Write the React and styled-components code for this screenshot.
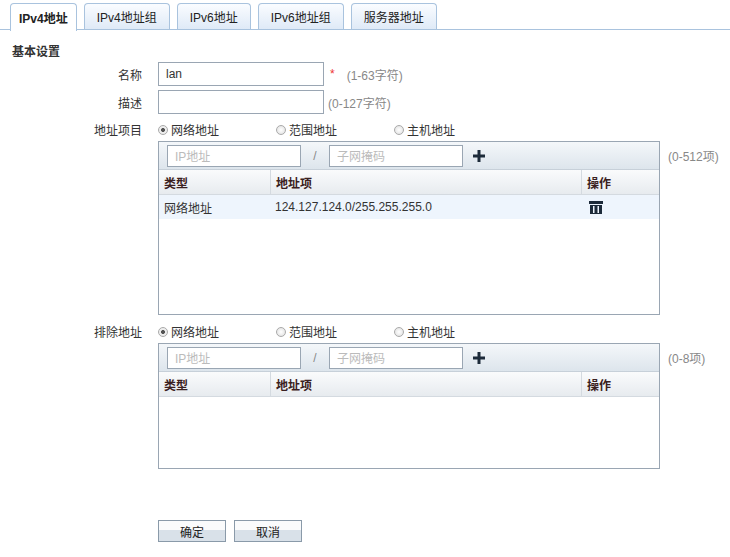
import React from 'react'
import styled, { createGlobalStyle } from 'styled-components'

const Global = createGlobalStyle`
  body {
    margin: 0;
    background: #fff;
    font-family: 'Liberation Sans', 'Noto Sans CJK SC', sans-serif;
    font-size: 12px;
    color: #333;
  }
`

const Page = styled.div`
  width: 730px;
  height: 557px;
  overflow: hidden;
`

const TabBar = styled.div`
  display: flex;
  gap: 7px;
  padding: 3px 0 0 10px;
  height: 26px;
  border-bottom: 1px solid #a9c3de;
  background: #fff;
`

const Tab = styled.div`
  height: ${p => (p.$active ? '27px' : '25px')};
  padding: 0 ${p => p.$pad}px;
  display: flex;
  align-items: center;
  border: 1px solid #a9c3de;
  border-bottom: none;
  border-radius: 4px 4px 0 0;
  background: ${p => (p.$active ? '#fff' : 'linear-gradient(#fafcff, #dfeaf7)')};
  font-weight: ${p => (p.$active ? 'bold' : 'normal')};
  color: #222;
  font-size: 12px;
  margin-bottom: -1px;
`

const Section = styled.div`
  padding: 12px 0 0 12px;
  font-weight: bold;
  color: #333;
`

const Row = styled.div`
  display: flex;
  align-items: ${p => (p.$top ? 'flex-start' : 'center')};
  margin-top: ${p => p.$mt || 0}px;
`

const Label = styled.div`
  width: 158px;
  text-align: right;
  padding-right: 16px;
  box-sizing: border-box;
  color: #333;
`

const TextInput = styled.div`
  width: 166px;
  height: 24px;
  box-sizing: border-box;
  border: 1px solid #9aa6b3;
  padding-left: 7px;
  display: flex;
  align-items: center;
  color: ${p => (p.$ph ? '#bbb' : '#333')};
  background: #fff;
  font-size: 12px;
`

const Hint = styled.span`
  color: #888;
  margin-left: ${p => p.$ml || 4}px;
`

const Star = styled.span`
  color: #e33;
  margin-left: 6px;
`

const Radios = styled.div`
  display: flex;
`

const Radio = styled.label`
  display: flex;
  align-items: center;
  width: ${p => p.$w}px;
  gap: 3px;
  color: #333;
`

const Dot = styled.span`
  width: 10px;
  height: 10px;
  border-radius: 50%;
  border: 1px solid #aaa;
  background: radial-gradient(${p => (p.$on ? '#555 30%, #eee 40%' : '#fff, #ddd')});
  box-sizing: border-box;
`

const Box = styled.div`
  width: 502px;
  height: ${p => p.$h}px;
  box-sizing: border-box;
  border: 1px solid #9aa6b3;
`

const Toolbar = styled.div`
  height: 27px;
  display: flex;
  align-items: center;
  padding-left: 8px;
  background: linear-gradient(#f4f7fa, #dde5ec);
  border-bottom: 1px solid #c7d0d9;
`

const Slash = styled.span`
  width: 28px;
  text-align: center;
  color: #888;
`

const Grid = styled.div`
  display: grid;
  grid-template-columns: 111px 311px 1fr;
`

const Head = styled.div`
  height: 24px;
  display: flex;
  align-items: center;
  padding-left: 5px;
  font-weight: bold;
  color: #3a2020;
  background: linear-gradient(#fafbfc, #e7ebef);
  border-bottom: 1px solid #d4dae0;
  border-left: ${p => (p.$first ? 'none' : '1px solid #d4dae0')};
`

const Cell = styled.div`
  height: 24px;
  display: flex;
  align-items: center;
  padding-left: ${p => p.$pl || 5}px;
  background: #eef5fd;
  color: #333;
`

const Buttons = styled.div`
  display: flex;
  gap: 8px;
  padding: 51px 0 0 158px;
`

const Button = styled.div`
  width: 68px;
  height: 22px;
  box-sizing: border-box;
  border: 1px solid #8a9aa9;
  display: flex;
  align-items: center;
  justify-content: center;
  background: linear-gradient(#fafbfc 0 45%, #d9e1e9 45%);
  color: #222;
`

const Plus = () => (
  <svg width="12" height="12" viewBox="0 0 12 12" style={{ marginLeft: 10 }}>
    <path d="M4.5 0h3v4.5H12v3H7.5V12h-3V7.5H0v-3h4.5z" fill="#1d2b3a" />
  </svg>
)

const Trash = () => (
  <svg width="14" height="13" viewBox="0 0 14 13">
    <rect x="0" y="0" width="14" height="3" fill="#1d2b3a" />
    <rect x="1" y="4" width="12" height="9" fill="#1d2b3a" />
    <rect x="4" y="5" width="1.5" height="7" fill="#eef5fd" />
    <rect x="8.5" y="5" width="1.5" height="7" fill="#eef5fd" />
  </svg>
)

const AddrBox = ({ h, rows }) => (
  <Box $h={h}>
    <Toolbar>
      <TextInput $ph style={{ width: 134, height: 22 }}>IP地址</TextInput>
      <Slash>/</Slash>
      <TextInput $ph style={{ width: 134, height: 22 }}>子网掩码</TextInput>
      <Plus />
    </Toolbar>
    <Grid>
      <Head $first>类型</Head>
      <Head>地址项</Head>
      <Head>操作</Head>
      {rows.map(r => (
        <React.Fragment key={r[1]}>
          <Cell>{r[0]}</Cell>
          <Cell>{r[1]}</Cell>
          <Cell $pl={8}><Trash /></Cell>
        </React.Fragment>
      ))}
    </Grid>
  </Box>
)

const RadioRow = ({ label, mt }) => (
  <Row $mt={mt}>
    <Label>{label}</Label>
    <Radios>
      <Radio $w={118}><Dot $on />网络地址</Radio>
      <Radio $w={118}><Dot />范围地址</Radio>
      <Radio $w={100}><Dot />主机地址</Radio>
    </Radios>
  </Row>
)

export default function App() {
  const tabs = [['IPv4地址', 8, true], ['IPv4地址组', 12], ['IPv6地址', 12], ['IPv6地址组', 12], ['服务器地址', 12]]
  return (
    <Page>
      <Global />
      <TabBar>
        {tabs.map(([t, p, a]) => <Tab key={t} $pad={p} $active={a}>{t}</Tab>)}
      </TabBar>
      <Section>基本设置</Section>
      <Row $mt={3}>
        <Label>名称</Label>
        <TextInput>lan</TextInput>
        <Star>*</Star>
        <Hint $ml={12}>(1-63字符)</Hint>
      </Row>
      <Row $mt={4}>
        <Label>描述</Label>
        <TextInput $ph />
        <Hint>(0-127字符)</Hint>
      </Row>
      <RadioRow label="地址项目" mt={7} />
      <Row $top $mt={3}>
        <Label />
        <AddrBox h={174} rows={[['网络地址', '124.127.124.0/255.255.255.0']]} />
        <Hint $ml={8} style={{ marginTop: 6 }}>(0-512项)</Hint>
      </Row>
      <RadioRow label="排除地址" mt={8} />
      <Row $top $mt={3}>
        <Label />
        <AddrBox h={126} rows={[]} />
        <Hint $ml={8} style={{ marginTop: 6 }}>(0-8项)</Hint>
      </Row>
      <Buttons>
        <Button>确定</Button>
        <Button>取消</Button>
      </Buttons>
    </Page>
  )
}
